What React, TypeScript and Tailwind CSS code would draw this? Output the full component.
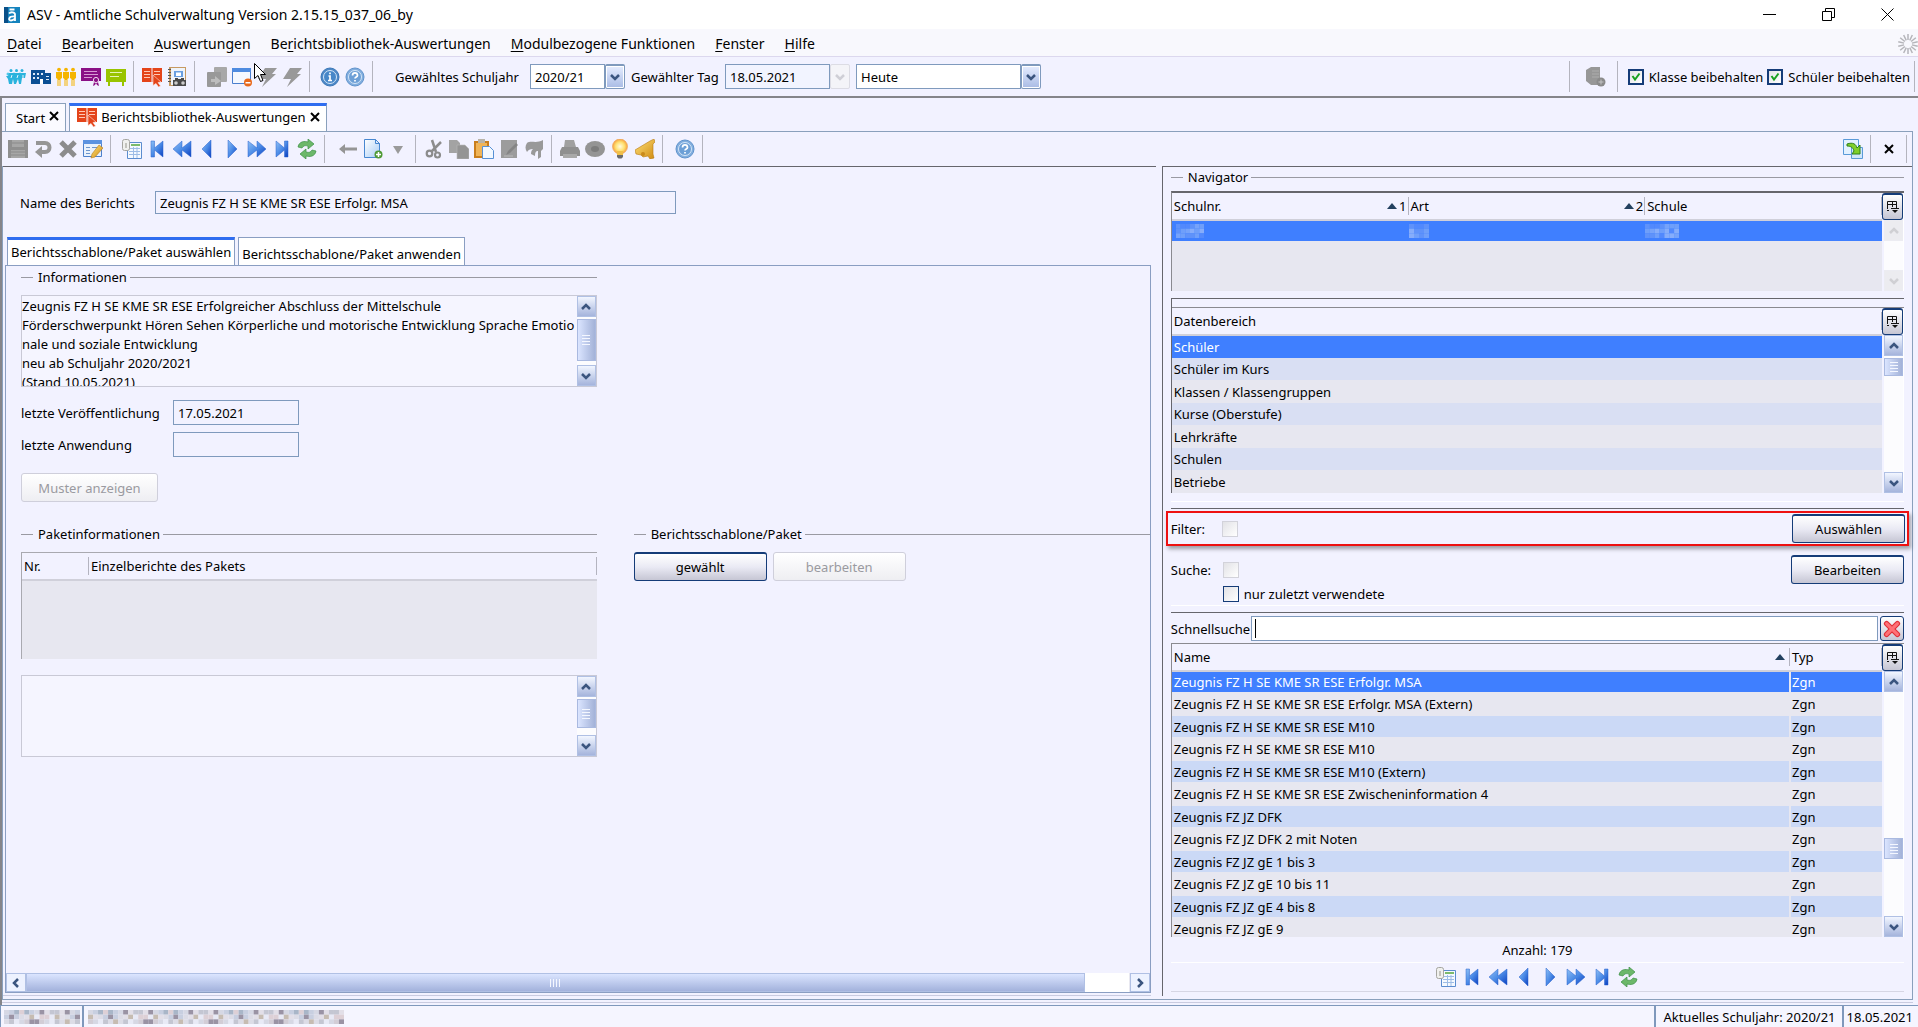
import React from 'react'
import clsx from 'clsx'

type Kids = { children?: React.ReactNode; className?: string }

/* ---------- Icons ---------- */

const Ico = ({ children, className = 'size-5' }: Kids) => (
  <svg viewBox="0 0 20 20" className={clsx('shrink-0', className)} aria-hidden="true">
    {children}
  </svg>
)

const Gradients = () => (
  <svg className="absolute size-0" aria-hidden="true">
    <defs>
      <linearGradient id="navBlue" x1="0" y1="0" x2="1" y2="1">
        <stop offset="0" stopColor="#8fc1f5" />
        <stop offset="0.5" stopColor="#4a8ae6" />
        <stop offset="1" stopColor="#0a3fc0" />
      </linearGradient>
      <linearGradient id="pageBlue" x1="0" y1="0" x2="1" y2="1">
        <stop offset="0" stopColor="#ffffff" />
        <stop offset="1" stopColor="#a9cdf5" />
      </linearGradient>
      <linearGradient id="gold" x1="0" y1="0" x2="1" y2="1">
        <stop offset="0" stopColor="#ffe27a" />
        <stop offset="1" stopColor="#d08a10" />
      </linearGradient>
      <radialGradient id="glow">
        <stop offset="0" stopColor="#fffbe0" />
        <stop offset="0.6" stopColor="#ffe070" />
        <stop offset="1" stopColor="#f5a040" />
      </radialGradient>
    </defs>
  </svg>
)

const PeopleIcon = () => (
  <Ico>
    {[4, 9.5, 15].map((x) => <circle key={x} cx={x + 1} cy="3.500" r="1.500" fill="#2bb3dd" />)}
    {[2, 8, 14].map((x) => <circle key={x} cx={x} cy="7" r="1.500" fill="#52c8ea" />)}
    <path d="M3 6h17l-1 5h-3l-1 6h-2l-1-5-2 5H8l-1-5-1 5H3l-1-5-2-3h2z" fill="#2bb3dd" />
    <path d="M6 8l-1 3M12 8l-1 3M17 8v3" stroke="#e8f7fc" />
  </Ico>
)
const SchoolIcon = () => (
  <Ico>
    <path d="M0 3h14v3h6v11H0z" fill="#0b4f94" />
    <path d="M2 6h2v2H2zm4 0h2v2H6zm4 0h2v2h-2zM2 10h2v2H2zm4 0h2v2H6zM15 9h3v1h-3zm0 3h3v1h-3z" fill="#dce9f8" />
    <path d="M9 12h3v5H9z" fill="#fff" />
  </Ico>
)
const ParentsIcon = () => (
  <Ico>
    {[3, 10, 17].map((x) => (
      <g key={x} fill="#f5b400">
        <circle cx={x} cy="2.600" r="1.900" />
        <path d={`M${x - 3} 5h6v6l-1.500 1v7h-1v-6h-1v6h-1v-7L${x - 3} 11z`} />
      </g>
    ))}
  </Ico>
)
const CertificateIcon = () => (
  <Ico>
    <path d="M0 1h20v13H0z" fill="#8a1086" />
    <path d="M3 4h13v1H3zm0 3h14v1H3zm0 3h8v1H3z" fill="#d79ad5" />
    <path d="M13 15l-1 4 2-1 1-2 1 2 2 1-1-4z" fill="#8a1086" />
    <circle cx="15" cy="13" r="2.600" fill="#8a1086" stroke="#efd9ee" />
  </Ico>
)
const BoardIcon = () => (
  <Ico>
    <path d="M0 2h20v13H0z" fill="#99c400" />
    <path d="M4 5h12v1H4zm0 4h9v1H4z" fill="#e6f4b8" />
    <path d="M2 15h2v4H2zm14 0h2v4h-2z" fill="#99c400" />
  </Ico>
)
const BookIcon = () => (
  <Ico>
    <path d="M0 1h9.500v14H0zM10.500 1H20v14h-9.500z" fill="#e4441a" />
    <path d="M2 4h6v1H2zm0 3h6v1H2zm0 3h6v1H2zM12 4h6v1h-6zm0 3h6v1h-6z" fill="#ffc9b5" />
    <path d="M11 8l8 7-3 .500 2.500 3.500-2 1-2.500-3.500-3 2z" fill="#e4441a" stroke="#fbe3dc" strokeWidth="0.600" />
  </Ico>
)
const ReportIcon = () => (
  <Ico>
    <path d="M2 0h17v19H2z" fill="#c79a62" />
    <path d="M4 1h14v17H4z" fill="#eef3fa" />
    <path d="M7 4h9v6H7z" fill="#6a9fe0" />
    <path d="M9 5.500h5v3.500H9z" fill="#fff" />
    <path d="M1 2h3v1H1zm0 3h3v1H1zm0 3h3v1H1zm0 3h3v1H1zm0 3h3v1H1z" fill="#555" />
    <path d="M6 13h2v-2h3v1h3v-1h3v2h2v6H6z" fill="#4a4a4a" />
    <circle cx="9" cy="16" r="1.800" fill="#ccc" />
    <circle cx="16" cy="16" r="1.800" fill="#ccc" />
  </Ico>
)
const StackIcon = () => (
  <Ico>
    <rect x="7" y="0" width="13" height="15" rx="1" fill="#a8a8a8" />
    <rect x="0" y="5" width="14" height="15" rx="1" fill="#999" />
    <path d="M4 12h4V9l6 5-6 4v-3H4z" fill="#bdbdbd" />
  </Ico>
)
const WindowIcon = () => (
  <Ico>
    <path d="M.5 1.500h18v15H.5z" fill="#f4f8ff" stroke="#4a7fce" />
    <path d="M0 1h19v4H0z" fill="#4e8be0" />
    <circle cx="16" cy="15.500" r="4" fill="#e8691b" />
    <path d="M13.500 15h5v1.500h-5z" fill="#fff" />
  </Ico>
)
const BoltIcon = () => (
  <Ico>
    <path d="M8 1h12l-5 6h4L5 20l4-8H1z" fill="#999" />
  </Ico>
)
const Badge = ({ help }: { help?: boolean }) => (
  <Ico>
    <circle cx="10" cy="10" r="9" fill={help ? '#82aede' : '#4d88c6'} stroke={help ? '#5f93cc' : '#3b78b8'} />
    <circle cx="10" cy="10" r="6.500" fill={help ? '#6c9fd6' : '#4787c8'} stroke="#d5e6f7" />
    {help ? (
      <path d="M7.500 8.500c0-3.500 5-3.500 5 0 0 1.500-2.500 1.500-2.500 3M10 13v1.500" fill="none" stroke="#fff" strokeWidth="1.700" />
    ) : (
      <path d="M8.500 9H10v4.500m-2 0h4M10 5.500v1.700" fill="none" stroke="#fff" strokeWidth="1.700" />
    )}
  </Ico>
)
const SaveIcon = () => (
  <Ico>
    <path d="M0 1h20v18H0z" fill="#8f8f8f" />
    <path d="M4 1h12v7H4zM3 11h14v8H3z" fill="#a6a6a6" />
    <path d="M3 13h14M3 16h14M4 4h12" stroke="#8a8a8a" />
  </Ico>
)
const UndoIcon = () => (
  <Ico>
    <path d="M3 4h9c6 0 6 9 0 9H8" fill="none" stroke="#969696" strokeWidth="4" />
    <path d="M9 7v12l-7-6z" fill="#969696" />
  </Ico>
)
const DeleteIcon = () => (
  <Ico>
    <path d="M3 3l14 14M17 3L3 17" stroke="#8c8c8c" strokeWidth="5" />
  </Ico>
)
const EditIcon = () => (
  <Ico>
    <path d="M.5 1.500h18v16H.5z" fill="#e9f1fc" stroke="#4d80cc" />
    <path d="M0 1h19v4H0z" fill="#5b92e0" />
    <path d="M3 8h4v1H3zm0 3h4v1H3zm0 3h4v1H3zM9 8h7v1H9z" fill="#6d95cc" />
    <path d="M16 6l4 3-8 9-4 1 1-4z" fill="url(#gold)" stroke="#b67b1a" strokeWidth="0.600" />
  </Ico>
)
const ListIcon = () => (
  <Ico>
    <path d="M5.500 3.500h14v16h-14z" fill="#f5f9ff" stroke="#5b8ccf" />
    <path d="M9 5h9v2H9z" fill="#7cba6c" />
    <path d="M7 9.500h11M7 12.500h11M7 15.500h11M11.500 8v11M15 8v11" stroke="#9dbce6" />
    <rect x="0.500" y="0.500" width="7" height="11" rx="2" fill="#f0f0ee" stroke="#a5a5a0" />
    <path d="M3 4h2v5H3z" fill="#c3c3bd" />
  </Ico>
)
const Nav = ({ d }: { d: string }) => (
  <Ico>
    <path d={d} fill="url(#navBlue)" stroke="#2a62cc" strokeWidth="0.500" />
  </Ico>
)
const FirstIcon = () => <Nav d="M4 2h3.500v7L16 2v16l-8.500-7v7H4z" />
const RewindIcon = () => <Nav d="M10 2v7l9-7v16l-9-7v7L1 10z" />
const PrevIcon = () => <Nav d="M14 1v18L5 10z" />
const NextIcon = () => <Nav d="M6 1v18l9-9z" />
const ForwardIcon = () => <Nav d="M10 2v7L1 2v16l9-7v7l9-8z" />
const LastIcon = () => <Nav d="M16 2h-3.500v7L4 2v16l8.500-7v7H16z" />
const RefreshIcon = () => (
  <Ico>
    <path d="M1 8C2 2 8 2 11 3V0l6 5-6 5V7C8 6 6 7 5 9z" fill="#6cb86a" stroke="#3c8f46" strokeWidth="0.700" />
    <path d="M19 12c-1 6-7 6-10 5v3l-6-5 6-5v3c3 1 5 0 6-2z" fill="#6cb86a" stroke="#3c8f46" strokeWidth="0.700" />
  </Ico>
)
const BackIcon = () => (
  <Ico>
    <path d="M1 10l6-5v3.500h12v3H7V15z" fill="#959595" />
  </Ico>
)
const NewPageIcon = () => (
  <Ico>
    <path d="M1.500.5h11l4 4v14h-15z" fill="url(#pageBlue)" stroke="#4787d0" />
    <path d="M12.500.5v4h4z" fill="#dceaff" stroke="#4787d0" />
    <circle cx="15.500" cy="15.500" r="4" fill="#4f9a35" />
    <path d="M13 15.500h5M15.500 13v5" stroke="#fff" strokeWidth="1.500" />
  </Ico>
)
const DropIcon = () => (
  <Ico>
    <path d="M5 7h10l-5 8z" fill="#9a9a9a" />
  </Ico>
)
const CutIcon = () => (
  <Ico>
    <path d="M8 1l4 12M17 3L7 13" stroke="#8c8c8c" strokeWidth="2.500" />
    <circle cx="5.500" cy="14.500" r="2.800" fill="none" stroke="#8c8c8c" strokeWidth="2.200" />
    <circle cx="13.500" cy="16" r="2.500" fill="none" stroke="#8c8c8c" strokeWidth="2.200" />
  </Ico>
)
const CopyIcon = () => (
  <Ico>
    <path d="M0 1h8l3 3v10H0z" fill="#a3a3a3" />
    <path d="M8 6h8l4 4v10H8z" fill="#949494" stroke="#b9b9b9" strokeWidth="0.600" />
  </Ico>
)
const PasteIcon = () => (
  <Ico>
    <path d="M0 2h15v17H0z" fill="#c97e1c" />
    <path d="M2 4h11v13H2z" fill="#f0b457" />
    <path d="M4 0h7v4H4z" fill="#b9b4a8" />
    <path d="M8.500 7.500h7l4 4v8h-11z" fill="#f2f8ff" stroke="#5790d4" />
  </Ico>
)
const NoteIcon = () => (
  <Ico>
    <path d="M2 1h16v18H2z" fill="#9c9c9c" />
    <path d="M17 4l-8 8-2 4 4-2 8-8z" fill="#858585" />
    <path d="M5 17h9" stroke="#bbb" />
  </Ico>
)
const FlagIcon = () => (
  <Ico>
    <path d="M3 4c4-3 9 1 16-3v9l-2 2v6l-3 2v-8c-2 0-3 1-3 5l-4-2c0-3 1-4 2-5-3 0-5 1-6 3-2-3-2-6 0-9z" fill="#999" />
  </Ico>
)
const PrintIcon = () => (
  <Ico>
    <path d="M5 1h9l2 7H4z" fill="#a0a0a0" />
    <path d="M2 8h16l2 4v5H0v-5z" fill="#8f8f8f" />
    <path d="M3 15h14v4H3z" fill="#a8a8a8" />
  </Ico>
)
const DiscIcon = () => (
  <Ico>
    <ellipse cx="10" cy="10" rx="10" ry="8" fill="#949494" />
    <ellipse cx="10" cy="10" rx="4" ry="3" fill="#7c7c7c" />
  </Ico>
)
const BulbIcon = () => (
  <Ico>
    <circle cx="10" cy="7.500" r="7.500" fill="url(#glow)" stroke="#efa85a" strokeWidth="0.700" />
    <path d="M7 12h6v4H7z" fill="#f0c04a" />
    <path d="M7 16h6v2l-1.500 1.500h-3L7 18z" fill="#6b6b6b" />
  </Ico>
)
const BellIcon = () => (
  <Ico>
    <path d="M15 2l2-1 2-1 1 3-2 2v10l1 4-4 1-2-3-5 1-2-2-5-1-1-4z" fill="url(#gold)" stroke="#b97a10" strokeWidth="0.600" />
    <circle cx="8" cy="15" r="2" fill="#c98a1a" />
  </Ico>
)
const SwapIcon = () => (
  <Ico>
    <path d="M.5.500h15v15H.5z" fill="#e3f1ff" stroke="#5a9ad8" />
    <path d="M8.500 8.500h11v11h-11z" fill="#cfe6fc" stroke="#5a9ad8" />
    <path d="M4 5c6-2 9 0 10 4l3-3v9H9l2-3c-1-4-4-5-7-5z" fill="#7fcf2a" stroke="#2f7f1c" />
  </Ico>
)
const ExportIcon = () => (
  <Ico>
    <path d="M0 3l5-3h9v12l2 1v5H5l-5-4z" fill="#979797" />
    <path d="M6 4h7M6 7h7M6 10h7" stroke="#adadad" />
    <circle cx="15" cy="15" r="4.500" fill="#8a8a8a" />
    <path d="M12.500 15h5M15 12.500v5" stroke="#c4c4c4" />
  </Ico>
)
const Cross = () => (
  <svg viewBox="0 0 10 10" className="size-2.5 shrink-0" aria-hidden="true">
    <path d="M1 1l8 8M9 1L1 9" stroke="#000" strokeWidth="2" />
  </svg>
)
const Chevron = ({ className }: { className?: string }) => (
  <svg viewBox="0 0 12 12" className={clsx('size-3 shrink-0', className)} aria-hidden="true">
    <path d="M2 4l4 4 4-4" fill="none" stroke="currentColor" strokeWidth="2.500" />
  </svg>
)
const SortUp = () => (
  <svg viewBox="0 0 10 6" className="h-1.5 w-2.5 shrink-0" aria-hidden="true">
    <path d="M5 0l5 6H0z" fill="#23415f" />
  </svg>
)

/* ---------- Small parts ---------- */

const Sep = () => <span className="mx-[5px] w-px self-stretch bg-[#b4b4be]" />

const Tool = ({ label, children }: Kids & { label: string }) => (
  <button type="button" aria-label={label} className="flex h-6 w-[25px] shrink-0 items-center justify-center">
    {children}
  </button>
)

const Legend = ({ children, className }: Kids) => (
  <div className={clsx('flex h-[18px] items-center leading-[18px]', className)}>
    <span className="h-px w-3 bg-[#9a9aa2]" />
    <span className="pr-[3px] pl-[5px]">{children}</span>
    <span className="h-px flex-1 bg-[#9a9aa2]" />
  </div>
)

const Push = ({ children, className, disabled }: Kids & { disabled?: boolean }) => (
  <button
    type="button"
    disabled={disabled}
    className={clsx(
      'h-[29px] rounded-[3px] border text-center',
      disabled
        ? 'border-[#cfcfdb] bg-linear-to-b from-white to-[#eeeef2] text-[#9a9aa0]'
        : 'border-t-2 border-[#153c78] bg-linear-to-b from-white via-[#eaeaf4] to-[#c6c6d4]',
      className,
    )}
  >
    {children}
  </button>
)

const Field = ({ className, ...rest }: React.InputHTMLAttributes<HTMLInputElement>) => (
  <input {...rest} className={clsx('border border-[#7f9abd] px-1 outline-none', className)} />
)

const Check = ({ label, checked, disabled, id }: { label?: string; checked?: boolean; disabled?: boolean; id: string }) => (
  <span className="flex shrink-0 items-center gap-[5px]">
    <span className="relative flex size-4">
      <input
        id={id}
        type="checkbox"
        defaultChecked={checked}
        disabled={disabled}
        className={clsx(
          'size-4 appearance-none bg-linear-to-br from-[#e2e2e6] to-white',
          disabled ? 'border border-[#d2d2da]' : 'border-[#153c78]',
          !disabled && (checked ? 'border-2' : 'border'),
        )}
      />
      {checked && (
        <svg viewBox="0 0 16 16" className="pointer-events-none absolute inset-0 size-4" aria-hidden="true">
          <path d="M4.500 7l2.500 3.500 4.500-6" fill="none" stroke="#18a020" strokeWidth="2" />
        </svg>
      )}
    </span>
    {label && <label htmlFor={id}>{label}</label>}
  </span>
)

const Combo = ({ label, value, className, disabled }: { label: string; value: string; className: string; disabled?: boolean }) => (
  <span className="flex shrink-0">
    {disabled ? (
      <Field aria-label={label} readOnly value={value} className={clsx('h-[25px]', className)} />
    ) : (
      <select aria-label={label} className={clsx('h-[25px] appearance-none border border-[#7f9abd] bg-white px-1 outline-none', className)}>
        <option>{value}</option>
      </select>
    )}
    <span
      className={clsx(
        'flex h-[25px] w-5 items-center justify-center rounded-[2px] border',
        disabled
          ? 'border-[#dcdce4] bg-[#f4f4f8] text-[#cfcfd6]'
          : 'border-t-2 border-[#7f9abd] bg-linear-to-b from-[#e6edff] to-[#a9bbe4] text-[#3b557f] ring-1 ring-white ring-inset',
      )}
    >
      <Chevron />
    </span>
  </span>
)

const ScrollButton = ({ label, turn, off }: { label: string; turn?: string; off?: boolean }) => (
  <button
    type="button"
    aria-label={label}
    disabled={off}
    className={clsx(
      'flex h-[21px] w-[19px] shrink-0 items-center justify-center border',
      off
        ? 'border-[#ececf2] bg-[#ececf0] text-[#d0d0d4]'
        : 'border-[#b0c0e4] bg-linear-to-b from-[#f2f6ff] to-[#a5b4dc] text-[#3b557f]',
    )}
  >
    <Chevron className={turn} />
  </button>
)

// Vertical scroll bar; the thumb class carries its offset and height
const ScrollBar = ({ thumb, className }: { thumb?: string; className?: string }) => (
  <div className={clsx('flex min-h-0 w-[19px] flex-col bg-[#fcfcfe]', className)}>
    <ScrollButton label="Nach oben" turn="rotate-180" off={!thumb} />
    <div className="min-h-0 flex-1">
      {thumb && (
        <div
          className={clsx(
            'flex w-[19px] flex-col items-center justify-center gap-0.5 border border-[#a9b9e0] bg-linear-to-r from-[#dbe5ff] to-[#a3b2d8]',
            thumb,
          )}
        >
          {[0, 1, 2, 3].map((n) => <span key={n} className="h-px w-2 bg-[#f4f7ff]" />)}
        </div>
      )}
    </div>
    <ScrollButton label="Nach unten" off={!thumb} />
  </div>
)

const ColumnButton = () => (
  <button
    type="button"
    aria-label="Spalten"
    className="flex h-[27px] w-[21px] shrink-0 items-center justify-center rounded-[3px] border border-t-2 border-[#153c78] bg-linear-to-b from-white to-[#c6c6d4]"
  >
    <svg viewBox="0 0 13 14" className="h-3.5 w-[13px]" aria-hidden="true">
      <path d="M1.500 9V1.500h9V8M1 4.500h10M6.500 1v6M1 10.500h2M5 8.500h8" fill="none" stroke="#111" />
      <path d="M6 10h6l-3 3z" fill="#111" />
    </svg>
  </button>
)

const Th = ({ children, className, sort }: Kids & { sort?: string }) => (
  <th scope="col" className={clsx('h-[27px] border-b-2 border-[#d0d0da] p-0 text-left font-normal', className)}>
    <div className="flex h-[18px] items-center border-r border-[#b4b4c0] pl-0.5">
      <span className="flex-1">{children}</span>
      {sort !== undefined && <SortUp />}
      {sort && <span className="pr-px pl-0.5">{sort}</span>}
      {sort === '' && <span className="w-1" />}
    </div>
  </th>
)

const GridFrame = ({ children, className, thumb }: Kids & { thumb?: string }) => (
  <div className={clsx('flex min-h-0 overflow-hidden border-t border-l border-[#8a8a90]', className)}>
    <div className="min-w-0 flex-1 overflow-hidden bg-[#e7e7f0]">{children}</div>
    <div className="flex w-[22px] flex-col items-end border-r border-white bg-[#f2f2ff]">
      <ColumnButton />
      <ScrollBar thumb={thumb} className="flex-1" />
    </div>
  </div>
)

/* ---------- Sections ---------- */

const menu = [
  ['', 'D', 'atei'],
  ['', 'B', 'earbeiten'],
  ['', 'A', 'uswertungen'],
  ['Be', 'r', 'ichtsbibliothek-Auswertungen'],
  ['', 'M', 'odulbezogene Funktionen'],
  ['', 'F', 'enster'],
  ['', 'H', 'ilfe'],
]

const TitleBar = () => (
  <header className="flex h-[29px] shrink-0 items-center bg-white pr-6 pl-1 text-sm">
    <svg viewBox="0 0 16 16" className="size-4" aria-hidden="true">
      <path d="M0 0h16v16H0z" fill="#1583bd" />
      <path d="M0 0h4v16H0z" fill="#0a5088" />
      <path d="M5 6.500c1.500-1.800 6-1.800 6 1V14M11 9.500c-7-.5-7 4-4 4 2 0 4-1.500 4-3M5.500 2.500h5" fill="none" stroke="#fff" strokeWidth="1.800" />
    </svg>
    <h1 className="ml-[7px] flex-1">ASV - Amtliche Schulverwaltung Version 2.15.15_037_06_by</h1>
    <div className="flex items-center gap-[46px]">
      <button type="button" aria-label="Minimieren">
        <svg viewBox="0 0 13 13" className="size-[13px]"><path d="M0 6.500h13" stroke="#000" /></svg>
      </button>
      <button type="button" aria-label="Wiederherstellen">
        <svg viewBox="0 0 13 13" className="size-[13px]"><path d="M.5 3.500h9v9h-9zM3.500 3V.500h9v9H10" fill="none" stroke="#000" /></svg>
      </button>
      <button type="button" aria-label="Schließen">
        <svg viewBox="0 0 13 13" className="size-[13px]"><path d="M.5.500l12 12M12.500.500l-12 12" stroke="#000" /></svg>
      </button>
    </div>
  </header>
)

const MenuBar = () => (
  <nav className="flex h-7 shrink-0 items-center justify-between border-b border-[#dcd8ee] bg-[#f8f8fd] pt-0.5 pl-[7px] text-sm">
    <div className="flex gap-5">
      {menu.map(([pre, key, post]) => (
        <button type="button" key={post}>
          {pre}<u className="underline-offset-2">{key}</u>{post}
        </button>
      ))}
    </div>
    <svg viewBox="0 0 20 20" className="size-5" aria-hidden="true">
      {Array.from({ length: 14 }, (_, i) => (
        <path key={i} d="M10 0v6" stroke="#b5b5ba" strokeWidth="1.500" transform={`rotate(${(i * 360) / 14} 10 10)`} />
      ))}
    </svg>
  </nav>
)

const MainToolbar = () => (
  <div className="flex h-[39px] shrink-0 items-center py-1 pl-[3px]">
    <Tool label="Schüler"><PeopleIcon /></Tool>
    <Tool label="Schule"><SchoolIcon /></Tool>
    <Tool label="Eltern"><ParentsIcon /></Tool>
    <Tool label="Zeugnisse"><CertificateIcon /></Tool>
    <Tool label="Klassen"><BoardIcon /></Tool>
    <Sep />
    <Tool label="Berichtsbibliothek"><BookIcon /></Tool>
    <Tool label="Berichte"><ReportIcon /></Tool>
    <Sep />
    <span className="w-1" />
    <Tool label="Module"><StackIcon /></Tool>
    <Tool label="Fenster schließen"><WindowIcon /></Tool>
    <span className="relative flex">
      <Tool label="Aktion"><BoltIcon /></Tool>
      <svg viewBox="0 0 12 19" className="absolute -top-0.5 left-0 h-[19px] w-3" aria-hidden="true">
        <path d="M.5.500v15l3.500-3 2.500 6 2.500-1-2.500-6h5z" fill="#fff" stroke="#000" />
      </svg>
    </span>
    <Tool label="Aktion wiederholen"><BoltIcon /></Tool>
    <Sep />
    <span className="w-0.5" />
    <Tool label="Info"><Badge /></Tool>
    <Tool label="Hilfe"><Badge help /></Tool>
    <Sep />
    <div className="ml-[17px] flex items-center">
      <span className="w-[135px]">Gewähltes Schuljahr</span>
      <Combo label="Gewähltes Schuljahr" value="2020/21" className="w-[75px]" />
      <span className="ml-1.5 w-[94px]">Gewählter Tag</span>
      <Combo label="Gewählter Tag" value="18.05.2021" className="w-[105px] bg-[#f2f4ff]" disabled />
      <span className="w-1.5" />
      <Combo label="Zeitraum" value="Heute" className="w-[165px]" />
    </div>
    <div className="ml-auto flex items-center self-stretch pr-[3px]">
      <Sep />
      <span className="w-[9px]" />
      <Tool label="Export"><ExportIcon /></Tool>
      <span className="w-[3px]" />
      <Sep />
      <div className="mr-1 ml-[5px] flex gap-1">
        <Check id="keepClass" label="Klasse beibehalten" checked />
        <Check id="keepPupil" label="Schüler beibehalten" checked />
      </div>
      <span className="w-px self-stretch bg-[#b4b4be]" />
    </div>
  </div>
)

const NavIcons = () => (
  <>
    <Tool label="Liste"><ListIcon /></Tool>
    <Tool label="Erster"><FirstIcon /></Tool>
    <Tool label="Zurückspulen"><RewindIcon /></Tool>
    <Tool label="Vorheriger"><PrevIcon /></Tool>
    <Tool label="Nächster"><NextIcon /></Tool>
    <Tool label="Vorspulen"><ForwardIcon /></Tool>
    <Tool label="Letzter"><LastIcon /></Tool>
    <Tool label="Aktualisieren"><RefreshIcon /></Tool>
  </>
)

const ModuleToolbar = () => (
  <div className="flex h-[34px] shrink-0 items-center py-[3px] pl-[3px]">
    <Tool label="Speichern"><SaveIcon /></Tool>
    <Tool label="Rückgängig"><UndoIcon /></Tool>
    <Tool label="Löschen"><DeleteIcon /></Tool>
    <Tool label="Bearbeiten"><EditIcon /></Tool>
    <Sep />
    <span className="w-[3px]" />
    <NavIcons />
    <Sep />
    <span className="w-[5px]" />
    <Tool label="Zurück"><BackIcon /></Tool>
    <Tool label="Neu"><NewPageIcon /></Tool>
    <Tool label="Neu Auswahl"><DropIcon /></Tool>
    <Sep />
    <Tool label="Ausschneiden"><CutIcon /></Tool>
    <Tool label="Kopieren"><CopyIcon /></Tool>
    <Tool label="Einfügen"><PasteIcon /></Tool>
    <Tool label="Notiz"><NoteIcon /></Tool>
    <Tool label="Markieren"><FlagIcon /></Tool>
    <Sep />
    <Tool label="Drucken"><PrintIcon /></Tool>
    <Tool label="Datenträger"><DiscIcon /></Tool>
    <Tool label="Tipp"><BulbIcon /></Tool>
    <Tool label="Erinnerung"><BellIcon /></Tool>
    <Sep />
    <span className="w-1" />
    <Tool label="Hilfe"><Badge help /></Tool>
    <Sep />
    <div className="ml-auto flex items-center self-stretch">
      <Tool label="Wechseln"><SwapIcon /></Tool>
      <Sep />
      <Tool label="Schließen"><Cross /></Tool>
      <Sep />
    </div>
  </div>
)

const info = `Zeugnis FZ H SE KME SR ESE Erfolgreicher Abschluss der Mittelschule
Förderschwerpunkt Hören Sehen Körperliche und motorische Entwicklung Sprache Emotio
nale und soziale Entwicklung
neu ab Schuljahr 2020/2021
(Stand 10.05.2021)`

const DetailPane = () => (
  <section className="flex min-w-0 flex-1 flex-col border-t border-[#66666c]">
    <div className="mt-6 flex items-center pl-[17px]">
      <label htmlFor="reportName" className="w-[135px]">Name des Berichts</label>
      <Field id="reportName" readOnly value="Zeugnis FZ H SE KME SR ESE Erfolgr. MSA" className="h-[23px] w-[521px] px-0.5" />
    </div>
    <div className="mt-[23px] flex h-7 gap-[3px] pl-1" role="tablist">
      <button type="button" role="tab" aria-selected="true" className="border border-t-[3px] border-b-0 border-[#8a9ec2] border-t-[#2f6df0] bg-white px-[3px] pb-0.5">
        Berichtsschablone/Paket auswählen
      </button>
      <button type="button" role="tab" aria-selected="false" className="border border-b-0 border-[#8a9ec2] bg-white px-[3px] pt-[5px]">
        Berichtsschablone/Paket anwenden
      </button>
    </div>
    <div className="mr-[5px] ml-0.5 flex min-h-0 flex-1 flex-col border border-[#8a9ec2]">
      <div className="flex-1 pt-0.5 pl-[15px]">
        <Legend className="w-[51%]">Informationen</Legend>
        <div className="mt-[9px] flex h-[92px] w-[51%] border border-[#c9c9d6]">
          <textarea
            aria-label="Informationen"
            readOnly
            value={info}
            className="min-w-0 flex-1 resize-none overflow-hidden whitespace-pre bg-[#f5f5ff] py-px leading-[19px] outline-none"
          />
          <ScrollBar thumb="mt-0.5 h-[42px]" />
        </div>
        <div className="mt-[13px] flex items-center">
          <label htmlFor="published" className="w-[152px]">letzte Veröffentlichung</label>
          <Field id="published" readOnly value="17.05.2021" className="h-[25px] w-[126px]" />
        </div>
        <div className="mt-[7px] flex items-center">
          <label htmlFor="applied" className="w-[152px]">letzte Anwendung</label>
          <Field id="applied" readOnly value="" className="h-[25px] w-[126px]" />
        </div>
        <Push disabled className="mt-4 w-[137px]">Muster anzeigen</Push>
        <div className="mt-[23px] flex gap-[37px]">
          <div className="w-[51%] shrink-0">
            <Legend>Paketinformationen</Legend>
            <div className="mt-[9px] h-[107px] border-t border-l border-[#a9a9b0] bg-[#e7e7f0]">
              <table className="w-full table-fixed bg-[#f2f2ff]">
                <thead>
                  <tr>
                    <Th className="w-[67px]">Nr.</Th>
                    <Th>Einzelberichte des Pakets</Th>
                  </tr>
                </thead>
              </table>
            </div>
            <div className="mt-4 flex h-[82px] border border-[#c9c9d6]">
              <textarea aria-label="Beschreibung" readOnly className="min-w-0 flex-1 resize-none bg-[#f5f5ff] outline-none" />
              <ScrollBar thumb="mt-0.5 h-[29px]" />
            </div>
          </div>
          <div className="min-w-0 flex-1">
            <Legend>Berichtsschablone/Paket</Legend>
            <div className="mt-[9px] flex gap-1.5">
              <Push className="w-[133px]">gewählt</Push>
              <Push disabled className="w-[133px]">bearbeiten</Push>
            </div>
          </div>
        </div>
      </div>
      <div className="flex h-[19px] bg-white">
        <button type="button" aria-label="Nach links" className="flex w-5 items-center justify-center border border-[#b0c0e4] bg-[#edf2ff] text-[#3b557f]">
          <Chevron className="rotate-90" />
        </button>
        <div className="flex-1 border-r border-[#e8e8f0]">
          <div className="flex h-full w-[96%] items-center justify-center gap-0.5 border border-[#b0c0e4] bg-linear-to-b from-[#dbe5ff] to-[#a3b2dc]">
            {[0, 1, 2, 3].map((n) => <span key={n} className="h-2 w-px bg-[#f4f7ff]" />)}
          </div>
        </div>
        <button type="button" aria-label="Nach rechts" className="flex w-5 items-center justify-center border border-[#b0c0e4] bg-[#edf2ff] text-[#3b557f]">
          <Chevron className="-rotate-90" />
        </button>
      </div>
    </div>
    <div className="mr-[5px] h-[3px] border-b border-[#c9cbe0]" />
  </section>
)

const areas = ['Schüler', 'Schüler im Kurs', 'Klassen / Klassengruppen', 'Kurse (Oberstufe)', 'Lehrkräfte', 'Schulen', 'Betriebe']

const reports = [
  'Zeugnis FZ H SE KME SR ESE Erfolgr. MSA',
  'Zeugnis FZ H SE KME SR ESE Erfolgr. MSA (Extern)',
  'Zeugnis FZ H SE KME SR ESE M10',
  'Zeugnis FZ H SE KME SR ESE M10',
  'Zeugnis FZ H SE KME SR ESE M10 (Extern)',
  'Zeugnis FZ H SE KME SR ESE Zwischeninformation 4',
  'Zeugnis FZ JZ DFK',
  'Zeugnis FZ JZ DFK 2 mit Noten',
  'Zeugnis FZ JZ gE 1 bis 3',
  'Zeugnis FZ JZ gE 10 bis 11',
  'Zeugnis FZ JZ gE 4 bis 8',
  'Zeugnis FZ JZ gE 9',
]

// Blocks of flat colour that stand in for masked text
const Mosaic = ({ cols, rows, colors, className }: { cols: number; rows: number; colors: string[]; className: string }) => (
  <svg viewBox={`0 0 ${cols * 5} ${rows * 5}`} preserveAspectRatio="none" className={className} aria-hidden="true">
    {Array.from({ length: cols * rows }, (_, i) => (
      <rect
        key={i}
        x={(i % cols) * 5}
        y={Math.floor(i / cols) * 5}
        width="5"
        height="5"
        fill={colors[(i * 7 + ((i * i) % 13) + Math.floor(i / cols) * 3) % colors.length]}
      />
    ))}
  </svg>
)

const cellBlue = ['#5f92fa', '#76a3fa', '#6f9ffa', '#5289fd', '#86adfb']
const greys = ['#d6d8e4', '#c4c6d2', '#b9b3c4', '#e2dfe8', '#ddd0d6', '#a9b6c8', '#e8eaf6', '#9a93a4', '#c8cfe0', '#d2cdd6', '#c6bcb2', '#dcdce6', '#e6e2ec']

const Navigator = () => (
  <aside className="flex min-h-0 w-[39.3%] shrink-0 flex-col border-t border-l border-[#66666c] px-2">
    <Legend className="mt-px">Navigator</Legend>
    <GridFrame className="mt-[5px] h-[100px] shrink-0 border-t-2 border-t-[#66666c]">
      <table className="w-full table-fixed">
        <thead className="bg-[#f2f2ff]">
          <tr>
            <Th className="w-1/3" sort="1">Schulnr.</Th>
            <Th className="w-1/3" sort="2">Art</Th>
            <Th>Schule</Th>
          </tr>
        </thead>
        <tbody>
          <tr className="h-[21px] bg-[#3f7fff]">
            <td className="p-0"><Mosaic cols={6} rows={3} colors={cellBlue} className="ml-1 h-3.5 w-7" /></td>
            <td className="p-0"><Mosaic cols={4} rows={3} colors={cellBlue} className="h-3.5 w-5" /></td>
            <td className="p-0"><Mosaic cols={7} rows={3} colors={cellBlue} className="h-3.5 w-[34px]" /></td>
          </tr>
        </tbody>
      </table>
    </GridFrame>
    <div className="mt-[7px] shrink-0 border-t border-l border-[#66666c] pt-2">
      <GridFrame className="h-[186px] border-l-0" thumb="mt-0.5 h-[18px]">
        <table className="w-full table-fixed">
          <thead className="bg-[#f2f2ff]">
            <tr><Th>Datenbereich</Th></tr>
          </thead>
          <tbody>
            {areas.map((area, i) => (
              <tr key={area} className={clsx(i % 2 ? 'h-[22px] bg-[#d9dff3]' : 'h-[23px]', i === 0 && 'bg-[#3f7fff] text-white')}>
                <td className="py-0 pl-0.5 leading-5">{area}</td>
              </tr>
            ))}
          </tbody>
        </table>
      </GridFrame>
    </div>
    <div className="mt-2 h-2 shrink-0 border-t border-b border-t-white border-b-[#66666c]" />
    {/* highlighted filter row */}
    <div className="-mx-[5px] mt-0.5 flex h-[35px] shrink-0 items-center border-2 border-[#ee1111] pr-0.5 pl-px shadow-[2px_3px_4px_rgba(0,0,0,0.35)]">
      <label htmlFor="filter" className="w-[53px] pl-0.5">Filter:</label>
      <Check id="filter" disabled />
      <Push className="ml-auto w-[113px]">Auswählen</Push>
    </div>
    <div className="mt-[9px] flex shrink-0 items-center">
      <label htmlFor="search" className="w-[52px]">Suche:</label>
      <Check id="search" disabled />
      <Push className="ml-auto w-[113px]">Bearbeiten</Push>
    </div>
    <div className="mt-px flex h-[18px] shrink-0 items-center pl-[52px]">
      <Check id="recent" label="nur zuletzt verwendete" />
    </div>
    <div className="mt-0.5 h-2 shrink-0 border-t border-b border-t-white border-b-[#66666c]" />
    <div className="mt-[3px] flex h-[25px] shrink-0 items-center">
      <label htmlFor="quick" className="mr-px">Schnellsuche</label>
      <div className="flex h-[25px] min-w-0 flex-1 items-center border border-[#7f9abd] bg-white pl-[3px]">
        <span className="h-[19px] w-px bg-black" />
        <input id="quick" type="text" className="min-w-0 flex-1 outline-none" />
      </div>
      <button type="button" aria-label="Suche leeren" className="ml-0.5 flex h-[25px] w-6 items-center justify-center rounded-[3px] border border-[#153c78] bg-linear-to-b from-white to-[#c6c6d4]">
        <Ico className="size-[18px]">
          <path d="M4 4l12 12M16 4L4 16" stroke="#e03038" strokeWidth="6" strokeLinecap="round" />
          <path d="M4 4l12 12M16 4L4 16" stroke="#ff7076" strokeWidth="3.500" strokeLinecap="round" />
        </Ico>
      </button>
    </div>
    <GridFrame className="mt-0.5 flex-1" thumb="mt-[146px] h-[21px]">
      <table className="w-full table-fixed">
        <thead className="bg-[#f2f2ff]">
          <tr>
            <Th sort="">Name</Th>
            <Th className="w-[92px]">Typ</Th>
          </tr>
        </thead>
        <tbody>
          {reports.map((name, i) => (
            <tr key={i} className={clsx(i % 2 ? 'h-6' : 'h-[21px]', i === 0 ? 'bg-[#3f7fff] text-white' : i % 2 === 0 && 'bg-[#cbd9f6]')}>
              <td className="py-0 pl-0.5 leading-5">{name}</td>
              <td className="border-l-2 border-[#e7e7f0] py-0 pl-px leading-5">Zgn</td>
            </tr>
          ))}
        </tbody>
      </table>
    </GridFrame>
    <div className="flex h-[25px] shrink-0 items-center justify-center">Anzahl: 179</div>
    <div className="mb-1 flex h-[30px] shrink-0 items-center justify-center gap-px border-t border-b border-t-white border-b-[#d6d6e4]">
      <NavIcons />
    </div>
  </aside>
)

const StatusBar = () => (
  <footer className="flex h-[22px] shrink-0 items-stretch border-t border-l border-[#7f98bc] bg-[#f5f5ff]">
    <div className="flex w-[83px] items-center border-r-2 border-[#7f98bc] pl-[3px]">
      <Mosaic cols={15} rows={3} colors={greys} className="h-3.5 w-[76px]" />
    </div>
    <div className="flex flex-1 items-center pl-1">
      <Mosaic cols={51} rows={3} colors={greys} className="h-3.5 w-[256px]" />
    </div>
    <div className="flex items-center border-l-2 border-[#7f98bc] pr-1.5 pl-[7px]">Aktuelles Schuljahr: 2020/21</div>
    <div className="flex items-center border-l-2 border-[#7f98bc] pr-[5px] pl-[3px]">18.05.2021</div>
  </footer>
)

const App: React.FC = () => {
  return (
    <div className="flex h-screen flex-col overflow-hidden bg-[#f2f2ff] font-['Noto_Sans',sans-serif] text-[13px] leading-5 text-black">
      <Gradients />
      <TitleBar />
      <MenuBar />
      <MainToolbar />
      <main className="flex min-h-0 flex-1 flex-col border-t-2 border-l-2 border-[#85858a] pr-[5px]">
        <div className="flex h-[34px] shrink-0 gap-[3px] border-b border-[#8aa0bc] pt-[5px] pl-[3px]" role="tablist">
          <div className="flex items-center gap-1 border border-b-0 border-[#8aa0bc] bg-[#fafaff] pr-1.5 pb-1 pl-2.5">
            <button type="button" role="tab" aria-selected="false" className="pt-1">Start</button>
            <button type="button" aria-label="Start schließen"><Cross /></button>
          </div>
          <div className="flex items-center gap-1 border border-t-[3px] border-b-0 border-[#8aa0bc] border-t-[#2f6df0] bg-white pr-1.5 pb-1 pl-[7px]">
            <BookIcon />
            <button type="button" role="tab" aria-selected="true">Berichtsbibliothek-Auswertungen</button>
            <button type="button" aria-label="Berichtsbibliothek-Auswertungen schließen"><Cross /></button>
          </div>
        </div>
        <div className="flex min-h-0 flex-1 flex-col border-r border-b border-[#8aa0bc]">
          <ModuleToolbar />
          <div className="flex min-h-0 flex-1 gap-1.5 border-l border-[#8aa0bc] pb-[3px]">
            <DetailPane />
            <Navigator />
          </div>
        </div>
        <div className="mt-[2px] h-[3px] shrink-0 border-t border-[#c9cbe0]" />
      </main>
      <StatusBar />
    </div>
  )
}

export default App
